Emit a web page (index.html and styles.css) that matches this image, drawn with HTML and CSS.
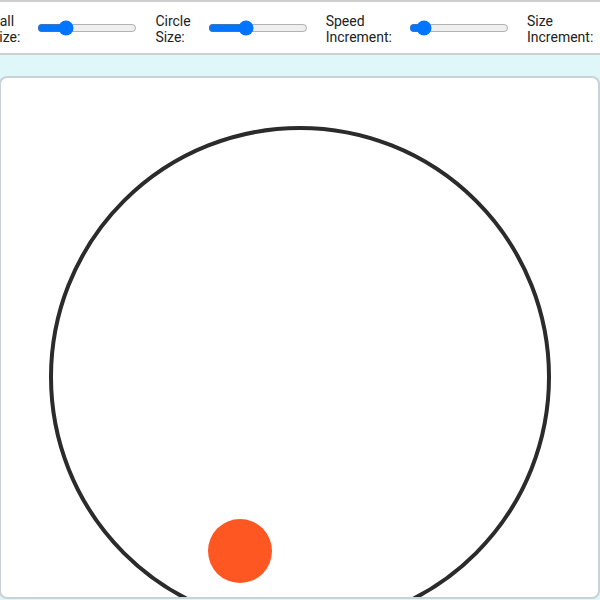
FILE: index.html
```html
<!DOCTYPE html>
<html>
<head>
<meta charset="utf-8">
<link rel="stylesheet" href="styles.css">
</head>
<body>
<div class="toolbar">
  <div class="controls">
    <label class="ctl"><span class="lbl">Ball Size:</span><input type="range" min="0" max="100" value="25"></label>
    <label class="ctl"><span class="lbl">Circle Size:</span><input type="range" min="0" max="100" value="36"></label>
    <label class="ctl"><span class="lbl">Speed Increment:</span><input type="range" min="0" max="100" value="8"></label>
    <label class="ctl"><span class="lbl">Size Increment:</span><input type="range" min="0" max="100" value="10"></label>
  </div>
</div>
<div class="stage">
  <div class="card">
    <div class="ring"></div>
    <div class="ball"></div>
  </div>
</div>
</body>
</html>
```
FILE: styles.css
```css
html, body {
  margin: 0;
  padding: 0;
  width: 600px;
  height: 600px;
  overflow: hidden;
  background: #e0f7fa;
  font-family: Roboto, "Noto Sans", sans-serif;
  font-size: 14px;
  color: #222;
}
.toolbar {
  background: #fff;
  border-top: 2px solid #cfcfcf;
  border-bottom: 2px solid #cfcfcf;
  height: 51px;
  overflow: hidden;
}
.controls {
  display: flex;
  align-items: center;
  height: 100%;
  gap: 18px;
  margin-left: -9px;
}
.ctl {
  display: flex;
  align-items: center;
  gap: 17px;
  flex: none;
}
.lbl {
  width: min-content;
  line-height: 16px;
  padding-top: 2px;
}
.ctl input {
  width: 100px;
  margin: 0;
  accent-color: #0075ff;
}
.stage {
  padding-top: 21px;
}
.card {
  position: relative;
  height: 519px;
  margin-left: -1px;
  background: #fff;
  border: 2px solid #c9d3d6;
  border-radius: 8px;
  overflow: hidden;
  display: flex;
  justify-content: center;
}
.ring {
  flex: none;
  width: 494px;
  height: 494px;
  border: 4px solid #2b2b2b;
  border-radius: 50%;
  margin-top: 48px;
}
.ball {
  position: absolute;
  left: 207px;
  top: 441px;
  width: 64px;
  height: 64px;
  border-radius: 50%;
  background: #ff5722;
}
```
